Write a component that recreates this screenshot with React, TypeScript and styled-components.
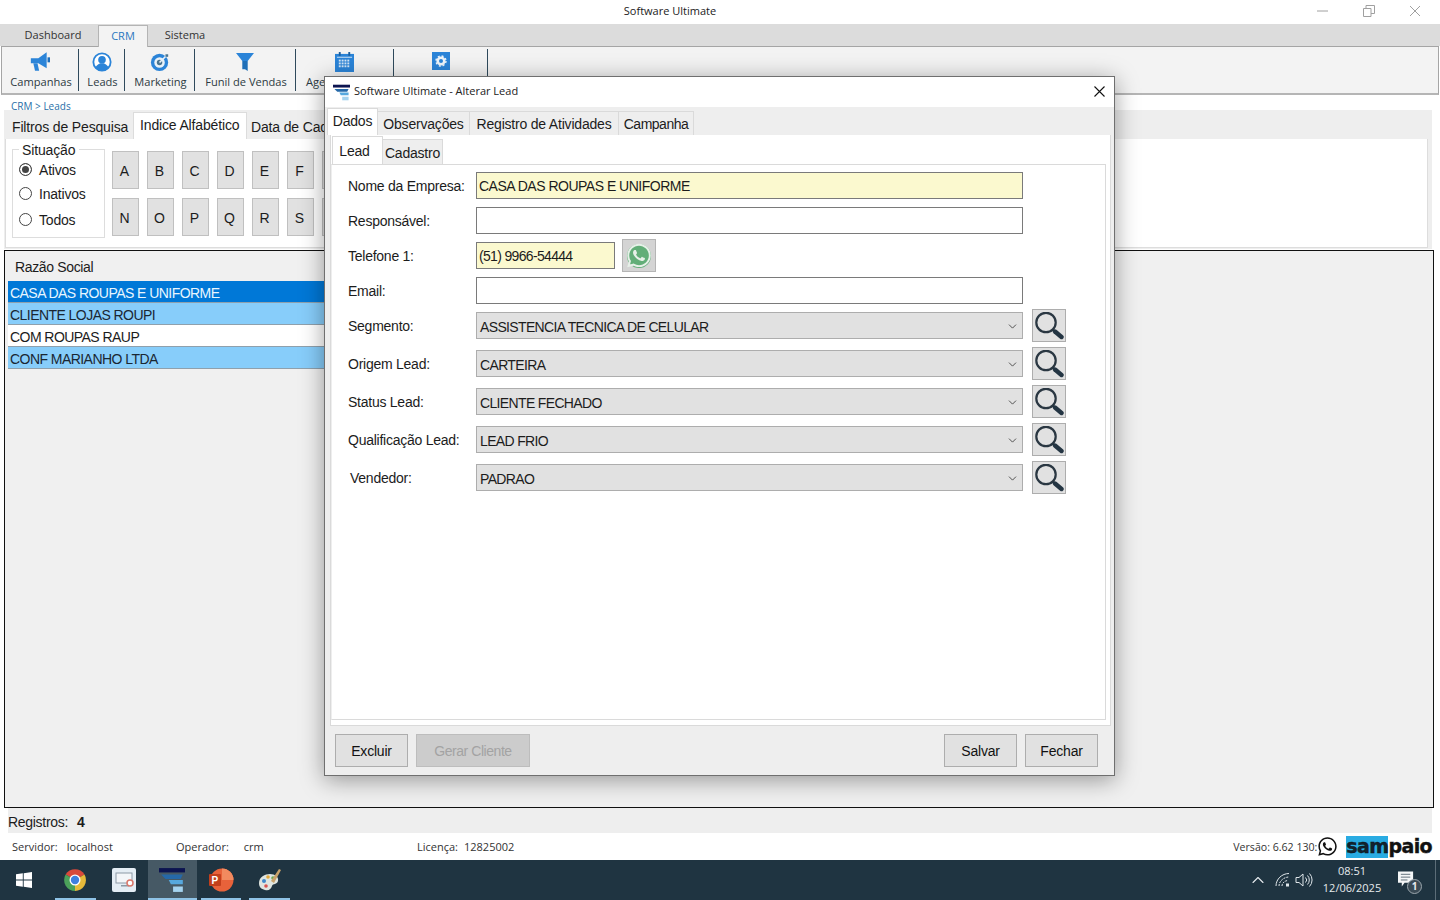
import React from 'react';
import styled, {createGlobalStyle} from "styled-components";
import {FaWhatsapp} from "react-icons/fa";
import {ChevronDown, ChevronUp} from "lucide-react";

const ui = `"Open Sans", "Noto Sans", sans-serif`;
const form = `"Liberation Sans", Arial, sans-serif`;

const GlobalStyle = createGlobalStyle`
    html, body {
        margin: 0;
        padding: 0;
        background: #fff;
    }
    * {
        box-sizing: border-box;
    }
`

// the rest of the alphabet sits behind the dialog
const LETTERS_TOP = 'ABCDEFG'.split('');
const LETTERS_BOTTOM = 'NOPQRST'.split('');

const LEADS = [
    {name: 'CASA DAS ROUPAS E UNIFORME', kind: 'selected'},
    {name: 'CLIENTE LOJAS ROUPI', kind: 'hot'},
    {name: 'COM ROUPAS RAUP', kind: 'plain'},
    {name: 'CONF MARIANHO LTDA', kind: 'hot'},
];

const SELECTS = [
    {label: 'Segmento:', value: 'ASSISTENCIA TECNICA DE CELULAR'},
    {label: 'Origem Lead:', value: 'CARTEIRA'},
    {label: 'Status Lead:', value: 'CLIENTE FECHADO'},
    {label: 'Qualificação Lead:', value: 'LEAD FRIO'},
    {label: 'Vendedor:', value: 'PADRAO', shifted: true},
];

const BLUE = '#2b84d8';

const MegaphoneIcon = () => (
    <svg width="20" height="19" viewBox="0 0 24 22">
        <path d="M1 7h9L20 0v19L10 13H1z" fill={BLUE}/>
        <path d="M4 13h5l2 9H6z" fill={BLUE}/>
        <rect x="21" y="6" width="3" height="6" fill="#1c6fbe"/>
    </svg>
);

const LeadsIcon = () => (
    <svg width="20" height="20" viewBox="0 0 22 22">
        <circle cx="11" cy="11" r="9.500" fill="#fff" stroke={BLUE} strokeWidth="2"/>
        <circle cx="11" cy="8.500" r="4.200" fill={BLUE}/>
        <path d="M3.500 17c2-3 4.500-3.600 5.500-4.500h4c1 .9 3.500 1.500 5.500 4.500a9 9 0 0 1-15 0z" fill={BLUE}/>
    </svg>
);

const TargetIcon = () => (
    <svg width="20" height="20" viewBox="0 0 22 22">
        <circle cx="10.500" cy="11.500" r="9.500" fill={BLUE}/>
        <circle cx="10.500" cy="11.500" r="5.800" fill="#e8f1f8"/>
        <circle cx="10.500" cy="11.500" r="3" fill="#4b7590"/>
        <path d="M10.500 11.500 19 3" stroke="#e8f1f8" strokeWidth="1.800"/>
        <path d="M17 2.500h3v2.800h-3z" fill="#4b7590"/>
    </svg>
);

const FunnelIcon = () => (
    <svg width="18" height="20" viewBox="0 0 20 22">
        <path d="M0 1h20l-7 9H7z" fill={BLUE}/>
        <path d="M7 10h6v11l-3-2H7z" fill="#1f6fb8"/>
    </svg>
);

const CalendarIcon = () => (
    <svg width="19" height="20" viewBox="0 0 20 21">
        <rect x="0" y="2" width="20" height="19" fill={BLUE}/>
        <rect x="4" y="0" width="2" height="4" fill="#1c5f9e"/>
        <rect x="14" y="0" width="2" height="4" fill="#1c5f9e"/>
        <rect x="2" y="5" width="16" height="1" fill="#d5e7f7"/>
        {[8, 11, 14].map(y => [4, 7, 10, 13].map(x => (
            <rect key={`${x}-${y}`} x={x} y={y} width="2" height="2" fill="#d5e7f7"/>
        )))}
    </svg>
);

const GearIcon = () => (
    <svg width="18" height="18" viewBox="0 0 18 18">
        <rect width="18" height="18" fill={BLUE}/>
        <circle cx="9" cy="9" r="3.300" fill="none" stroke="#eef5fb" strokeWidth="2.600"/>
        <circle cx="9" cy="9" r="5" fill="none" stroke="#eef5fb" strokeWidth="1.400" strokeDasharray="2 1.930"/>
    </svg>
);

const SearchIcon = () => (
    <svg width="30" height="28" viewBox="0 0 30 28">
        <circle cx="12" cy="10.500" r="9.700" fill="none" stroke="#2a3742" strokeWidth="2.200"/>
        <path d="M19 17.500 20.500 19" stroke="#2a3742" strokeWidth="2"/>
        <path d="M21 19.500 27.500 25" stroke="#243543" strokeWidth="4.400" strokeLinecap="round"/>
    </svg>
);

const AppLogo = ({size}: {size: number}) => (
    <svg width={size} height={size} viewBox="0 0 24 24">
        <rect x="0" y="1" width="24" height="4" fill="#0c1450"/>
        <path d="M2 7h20l-2 4H6z" fill="#2568a8"/>
        <path d="M9 12h13v4H11z" fill="#56a8de"/>
        <rect x="13" y="18" width="9" height="5" fill="#a5d3ef"/>
    </svg>
);

const WindowsIcon = () => (
    <svg width="16" height="16" viewBox="0 0 16 16">
        <path d="M0 2.300 6.800 1.300v6.200H0zM7.700 1.200 16 0v7.500H7.700zM0 8.400h6.800v6.300L0 13.700zM7.700 8.400H16V16l-8.300-1.200z" fill="#fff"/>
    </svg>
);

const ChromeIcon = () => (
    <svg width="24" height="24" viewBox="0 0 24 24">
        <path d="M12 12 2.600 6.500A11 11 0 0 1 21.500 6.500z" fill="#d9493b"/>
        <path d="M12 12 21.500 6.500A11 11 0 0 1 12 23z" fill="#e6b93a"/>
        <path d="M12 12 12 23A11 11 0 0 1 2.600 6.500z" fill="#4ba15a"/>
        <circle cx="12" cy="12" r="5.500" fill="#fff"/>
        <circle cx="12" cy="12" r="4.200" fill="#3f7fe0"/>
    </svg>
);

const SlideIcon = () => (
    <svg width="24" height="24" viewBox="0 0 24 24">
        <rect width="24" height="24" rx="2" fill="#e4edf4"/>
        <rect x="4" y="5" width="16" height="10" fill="#f3f6f9" stroke="#8c9aa6"/>
        <rect x="9" y="17" width="8" height="1.500" fill="#8c9aa6"/>
        <circle cx="18" cy="15" r="3" fill="#fff" stroke="#d9776a" strokeWidth="1.500"/>
    </svg>
);

const PowerPointIcon = () => (
    <svg width="26" height="24" viewBox="0 0 26 24">
        <circle cx="14" cy="12" r="11.500" fill="#e8623a"/>
        <path d="M14 .5A11.500 11.500 0 0 1 25.500 12H14z" fill="#f28a5f"/>
        <rect x="1" y="6" width="12" height="12" rx="1" fill="#c23f1c"/>
        <text x="3.500" y="16" fill="#fff" fontSize="10" fontWeight="700" fontFamily={form}>P</text>
    </svg>
);

const PaletteIcon = () => (
    <svg width="24" height="26" viewBox="0 0 24 26">
        <path d="M1 16c0-6 6-9 11-9s9 3 8 7-5 2-6 5-3 5-7 4-6-3-6-7z" fill="#dfe5e0"/>
        <circle cx="6" cy="14" r="2" fill="#3f88c9"/>
        <circle cx="10" cy="10" r="1.800" fill="#e2a93b"/>
        <circle cx="15" cy="11" r="1.800" fill="#6aa84f"/>
        <circle cx="8" cy="19" r="1.800" fill="#d9534f"/>
        <path d="M13 14 21 2l2 1-7 13z" fill="#c9a26a"/>
    </svg>
);

const WifiIcon = () => (
    <svg width="16" height="16" viewBox="0 0 16 16" fill="none" stroke="#dfe6ea" strokeWidth="1">
        <path d="M1 14C1 7 7 1.500 14 1.500"/>
        <path d="M4 14C4 9 9 5 14 5" strokeDasharray="2 1"/>
        <path d="M7 14C7 11 10 8.500 13 8.500" strokeDasharray="2 1"/>
        <rect x="11" y="11.500" width="3" height="3" fill="#dfe6ea" stroke="none"/>
    </svg>
);

const SpeakerIcon = () => (
    <svg width="18" height="16" viewBox="0 0 18 16" fill="none" stroke="#dfe6ea" strokeWidth="1">
        <path d="M1 5.500h3L8 2v12l-4-3.500H1z"/>
        <path d="M10.500 5.500a3.500 3.500 0 0 1 0 5"/>
        <path d="M12.500 3.500a6.500 6.500 0 0 1 0 9"/>
        <path d="M14.500 1.500a9.500 9.500 0 0 1 0 13"/>
    </svg>
);

const NotificationIcon = () => (
    <svg width="17" height="17" viewBox="0 0 18 17">
        <path d="M0 0h16v12H7l-3 4v-4H0z" fill="#f4f6f7"/>
        <path d="M3 3h10M3 6h10M3 9h7" stroke="#5b6b76" strokeWidth="1"/>
    </svg>
);

const toolItems = [
    {id: 'campanhas', label: 'Campanhas', width: 77, icon: <MegaphoneIcon/>},
    {id: 'leads', label: 'Leads', width: 46, icon: <LeadsIcon/>},
    {id: 'marketing', label: 'Marketing', width: 70, icon: <TargetIcon/>},
    {id: 'funil', label: 'Funil de Vendas', width: 101, icon: <FunnelIcon/>},
    {id: 'agenda', label: 'Age', width: 98, icon: <CalendarIcon/>, cutOff: true},
    {id: 'ajustes', label: '', width: 94, icon: <GearIcon/>},
];

const App = () => {
    return (
        <Screen>
            <GlobalStyle/>
            <TitleBar>
                <TitleText>Software Ultimate</TitleText>
                <WindowControls>
                    <svg width="12" height="12" viewBox="0 0 12 12"><path d="M0 6h11" stroke="#a0a0a0"/></svg>
                    <svg width="12" height="12" viewBox="0 0 12 12" fill="none" stroke="#a0a0a0"><path d="M.5 3.500h7.500v8H.5zM3 3.500V.5h8.500v8H8"/></svg>
                    <svg width="12" height="12" viewBox="0 0 12 12"><path d="M1 1l10 10M11 1 1 11" stroke="#a0a0a0"/></svg>
                </WindowControls>
            </TitleBar>

            <MenuStrip>
                <MenuTab $width={90}>Dashboard</MenuTab>
                <MenuTab $width={50} $active>CRM</MenuTab>
                <MenuTab $width={74}>Sistema</MenuTab>
            </MenuStrip>

            <Toolbar>
                {toolItems.map(item => (
                    <ToolItem key={item.id} $width={item.width}>
                        <ToolIcon>{item.icon}</ToolIcon>
                        <ToolLabel $cutOff={item.cutOff}>{item.label}</ToolLabel>
                    </ToolItem>
                ))}
            </Toolbar>

            <Breadcrumb>CRM &gt; Leads</Breadcrumb>

            <FilterTabs>
                <TabRow>
                    <BackTab $width={128} $pad={7}>Filtros de Pesquisa</BackTab>
                    <BackTab $width={114} $pad={6} $active>Indice Alfabético</BackTab>
                    <BackTab $width={78} $pad={4}>Data de Cad</BackTab>
                </TabRow>
                <FilterPanel>
                    <SituationBox>
                        <SituationLegend>Situação</SituationLegend>
                        <RadioRow $bottom={8}><Radio $checked/>Ativos</RadioRow>
                        <RadioRow $bottom={10}><Radio/>Inativos</RadioRow>
                        <RadioRow $bottom={0}><Radio/>Todos</RadioRow>
                    </SituationBox>
                    <LetterGrid>
                        {[LETTERS_TOP, LETTERS_BOTTOM].map(row => (
                            <LetterRow key={row[0]}>
                                {row.map(letter => (
                                    <LetterButton key={letter}>{letter === 'G' || letter === 'T' ? '' : letter}</LetterButton>
                                ))}
                            </LetterRow>
                        ))}
                    </LetterGrid>
                </FilterPanel>
            </FilterTabs>

            <LeadGrid>
                <GridHeader>Razão Social</GridHeader>
                {LEADS.map(lead => <GridRow key={lead.name} $kind={lead.kind}>{lead.name}</GridRow>)}
            </LeadGrid>

            <CountBar>
                <span>Registros:</span>
                <CountValue>4</CountValue>
            </CountBar>

            <StatusBar>
                <StatusField $width={164}>Servidor:<StatusValue $gap={9}>localhost</StatusValue></StatusField>
                <StatusField $width={241}>Operador:<StatusValue $gap={15}>crm</StatusValue></StatusField>
                <StatusField $width={400}>Licença:<StatusValue $gap={6}>12825002</StatusValue></StatusField>
                <StatusRight>
                    <VersionText>Versão: 6.62 130:</VersionText>
                    <FaWhatsapp size={21} color="#111"/>
                    <SampaioLogo><SampaioMark>sam</SampaioMark>paio</SampaioLogo>
                </StatusRight>
            </StatusBar>

            <Taskbar>
                <StartButton><WindowsIcon/></StartButton>
                <TaskItem $running><ChromeIcon/></TaskItem>
                <TaskItem><SlideIcon/></TaskItem>
                <TaskItem $running $active><AppLogo size={26}/></TaskItem>
                <TaskItem $running><PowerPointIcon/></TaskItem>
                <TaskItem $running><PaletteIcon/></TaskItem>
                <Tray>
                    <ChevronUp size={20} color="#e6ebee" strokeWidth={1.300}/>
                    <WifiIcon/>
                    <SpeakerSlot><SpeakerIcon/></SpeakerSlot>
                    <Clock>
                        <span>08:51</span>
                        <span>12/06/2025</span>
                    </Clock>
                    <NotificationArea>
                        <NotificationIcon/>
                        <NotificationBadge>1</NotificationBadge>
                    </NotificationArea>
                    <ShowDesktop/>
                </Tray>
            </Taskbar>

            <Modal>
                <ModalTitle>
                    <AppLogo size={17}/>
                    <ModalTitleText>Software Ultimate - Alterar Lead</ModalTitleText>
                    <ModalClose>
                        <svg width="11" height="11" viewBox="0 0 11 11"><path d="M.5.5l10 10M10.500.5l-10 10" stroke="#111" strokeWidth="1.100"/></svg>
                    </ModalClose>
                </ModalTitle>

                <ModalTabRow>
                    <ModalTab $width={51} $active>Dados</ModalTab>
                    <ModalTab $width={92}>Observações</ModalTab>
                    <ModalTab $width={149}>Registro de Atividades</ModalTab>
                    <ModalTab $width={75} $tight>Campanha</ModalTab>
                </ModalTabRow>

                <ModalPage>
                    <InnerTabRow>
                        <InnerTab $width={51} $active>Lead</InnerTab>
                        <InnerTab $width={60}>Cadastro</InnerTab>
                    </InnerTabRow>
                    <FormPanel>
                        <FormRow>
                            <FieldLabel>Nome da Empresa:</FieldLabel>
                            <TextField $required>CASA DAS ROUPAS E UNIFORME</TextField>
                        </FormRow>
                        <FormRow>
                            <FieldLabel>Responsável:</FieldLabel>
                            <TextField/>
                        </FormRow>
                        <FormRow>
                            <FieldLabel>Telefone 1:</FieldLabel>
                            <TextField $required $compact $width={139}>(51) 9966-54444</TextField>
                            <WhatsButton>
                                <WhatsDisc><FaWhatsapp size={27} color="#e6f0e8"/></WhatsDisc>
                            </WhatsButton>
                        </FormRow>
                        <FormRow>
                            <FieldLabel>Email:</FieldLabel>
                            <TextField/>
                        </FormRow>
                        {SELECTS.map(field => (
                            <SelectRow key={field.label}>
                                <FieldLabel $shifted={field.shifted}>{field.label}</FieldLabel>
                                <SelectField>
                                    <SelectValue>{field.value}</SelectValue>
                                    <SelectChevron size={13} color="#333" strokeWidth={1.500}/>
                                </SelectField>
                                <SearchButton><SearchIcon/></SearchButton>
                            </SelectRow>
                        ))}
                    </FormPanel>
                </ModalPage>

                <ModalFooter>
                    <FooterButton>Excluir</FooterButton>
                    <FooterButton $disabled $width={114}>Gerar Cliente</FooterButton>
                    <FooterSpacer/>
                    <FooterButton>Salvar</FooterButton>
                    <FooterButton>Fechar</FooterButton>
                </ModalFooter>
            </Modal>
        </Screen>
    );
};

export default App;

const Screen = styled.div`
    position: relative;
    width: 1440px;
    height: 900px;
    overflow: hidden;
    display: flex;
    flex-direction: column;
    background: #fff;
`

const TitleBar = styled.div`
    height: 24px;
    flex: none;
    padding: 0 100px 4px 0;
    display: flex;
    align-items: center;
    justify-content: center;
    position: relative;
`

const TitleText = styled.span`
    font: 11px ${ui};
    color: #222;
`

const WindowControls = styled.div`
    position: absolute;
    top: 5px;
    right: 19px;
    display: flex;
    gap: 34px;
`

const MenuStrip = styled.div`
    height: 22px;
    flex: none;
    display: flex;
    padding-left: 8px;
    background: #dcdcdc;
`

const MenuTab = styled.div<{$width: number, $active?: boolean}>`
    width: ${props => props.$width}px;
    height: ${props => props.$active ? 22 : 21}px;
    margin-top: 1px;
    padding-bottom: 2px;
    display: flex;
    align-items: center;
    justify-content: center;
    font: 11px ${ui};
    color: ${props => props.$active ? '#2a78c0' : '#333'};
    background: ${props => props.$active ? '#f3f3f3' : 'transparent'};
    border: ${props => props.$active ? '1px solid #b4b4b4' : 'none'};
    border-bottom: none;
    z-index: 1;
`

const Toolbar = styled.div`
    height: 49px;
    flex: none;
    margin: 0 1px;
    padding: 2px 0;
    display: flex;
    background: #f3f3f3;
    border: 1px solid #a5a5a5;
    border-bottom: 2px solid #b5b5b5;
`

const ToolItem = styled.div<{$width: number}>`
    width: ${props => props.$width}px;
    height: 42px;
    display: flex;
    flex-direction: column;
    align-items: center;
    border-right: 1px solid #2f4a5c;
`

const ToolIcon = styled.div`
    height: 25px;
    padding-top: 3px;
    display: flex;
    align-items: flex-start;
    justify-content: center;
`

const ToolLabel = styled.span<{$cutOff?: boolean}>`
    align-self: ${props => props.$cutOff ? 'flex-start' : 'center'};
    padding-left: ${props => props.$cutOff ? 10 : 2}px;
    font: 11.100px ${ui};
    color: #2c3a42;
    white-space: nowrap;
`

const Breadcrumb = styled.div`
    height: 15px;
    flex: none;
    padding: 6px 0 0 11px;
    font: 10px/11px ${ui};
    color: #2a6fa8;
`

const FilterTabs = styled.div`
    width: 1428px;
    height: 139px;
    flex: none;
    margin-left: 4px;
    background: #eeeeee;
`

const TabRow = styled.div`
    height: 29px;
    display: flex;
    align-items: flex-end;
    padding-left: 1px;
`

const BackTab = styled.div<{$width: number, $pad: number, $active?: boolean}>`
    width: ${props => props.$width}px;
    height: ${props => props.$active ? 27 : 24}px;
    flex: none;
    display: flex;
    align-items: center;
    padding-left: ${props => props.$pad}px;
    padding-bottom: ${props => props.$active ? 2 : 0}px;
    font: 14px ${form};
    letter-spacing: -0.15px;
    color: #1c1c1c;
    background: ${props => props.$active ? '#fff' : 'transparent'};
    border: ${props => props.$active ? '1px solid #dcdcdc' : 'none'};
    border-bottom: none;
    white-space: nowrap;
`

const FilterPanel = styled.div`
    height: 109px;
    margin: 0 4px 0 1px;
    padding: 9px 0 0 6px;
    display: flex;
    gap: 7px;
    background: #fff;
    border: 1px solid #dddddd;
    border-top: none;
`

const SituationBox = styled.div`
    position: relative;
    width: 93px;
    height: 89px;
    margin-top: 1px;
    padding: 12px 0 0 6px;
    border: 1px solid #dddddd;
`

const SituationLegend = styled.span`
    position: absolute;
    top: -8px;
    left: 6px;
    padding: 0 4px 0 3px;
    background: #fff;
    font: 14px ${form};
    letter-spacing: -0.15px;
    color: #1c1c1c;
`

const RadioRow = styled.div<{$bottom: number}>`
    height: 16px;
    margin-bottom: ${props => props.$bottom}px;
    display: flex;
    align-items: center;
    gap: 7px;
    font: 14px ${form};
    letter-spacing: -0.2px;
    color: #1c1c1c;
`

const Radio = styled.span<{$checked?: boolean}>`
    width: 13px;
    height: 13px;
    flex: none;
    margin-top: -2px;
    border-radius: 50%;
    border: 1px solid #444;
    background: ${props => props.$checked ? '#444' : '#fff'};
    box-shadow: ${props => props.$checked ? 'inset 0 0 0 2px #fff' : 'none'};
`

const LetterGrid = styled.div`
    display: flex;
    flex-direction: column;
    gap: 9px;
    margin-top: 3px;
`

const LetterRow = styled.div`
    display: flex;
    gap: 8px;
`

const LetterButton = styled.div`
    width: 27px;
    height: 38px;
    padding: 2px 2px 0 0;
    display: flex;
    align-items: center;
    justify-content: center;
    font: 14px ${form};
    color: #1c1c1c;
    background: #e1e1e1;
    border: 1px solid #c0c0c0;
`

const LeadGrid = styled.div`
    width: 1430px;
    height: 558px;
    flex: none;
    margin: 1px 0 0 4px;
    padding: 1px 0 0 3px;
    background: #f0f0f0;
    border: 1px solid #111;
`

const GridHeader = styled.div`
    height: 29px;
    padding-left: 7px;
    display: flex;
    align-items: center;
    font: 14px ${form};
    letter-spacing: -0.35px;
    color: #1c1c1c;
`

const rowColors: Record<string, {bg: string, fg: string}> = {
    selected: {bg: '#0078d7', fg: '#e8f6ff'},
    hot: {bg: '#87cdfa', fg: '#1a2733'},
    plain: {bg: '#ffffff', fg: '#1c1c1c'},
};

const GridRow = styled.div<{$kind: string}>`
    width: 600px;
    height: 22px;
    padding: 2px 0 0 2px;
    font: 14px/20px ${form};
    letter-spacing: -0.55px;
    color: ${props => rowColors[props.$kind].fg};
    background: ${props => rowColors[props.$kind].bg};
    border-bottom: 1px solid #8fa0ac;
`

const CountBar = styled.div`
    width: 1424px;
    height: 25px;
    flex: none;
    margin-left: 8px;
    padding-top: 2px;
    display: flex;
    align-items: center;
    gap: 9px;
    background: #eeeeee;
    font: 14px ${form};
    letter-spacing: -0.3px;
    color: #1c1c1c;
`

const CountValue = styled.b`
    font-weight: 700;
`

const StatusBar = styled.div`
    height: 27px;
    flex: none;
    padding-left: 12px;
    display: flex;
    align-items: center;
    font: 11px ${ui};
    color: #333;
`

const StatusField = styled.div<{$width: number}>`
    width: ${props => props.$width}px;
    flex: none;
    white-space: nowrap;
`

const StatusValue = styled.span<{$gap: number}>`
    margin-left: ${props => props.$gap}px;
`

const StatusRight = styled.div`
    flex: 1;
    display: flex;
    align-items: center;
    justify-content: flex-end;
    padding-right: 8px;
`

const VersionText = styled.span`
    width: 84px;
    font-size: 10.600px;
    white-space: nowrap;
`

const SampaioLogo = styled.span`
    margin-left: 8px;
    height: 22px;
    font: 700 19px/21px "DejaVu Sans", sans-serif;
    letter-spacing: -0.6px;
    color: #111;
    -webkit-text-stroke: 0.4px #111;
`

const SampaioMark = styled.span`
    display: inline-block;
    height: 22px;
    background: #29abe2;
    color: #10222e;
`

const Taskbar = styled.div`
    height: 40px;
    flex: none;
    display: flex;
    background: #1f3441;
`

const StartButton = styled.div`
    width: 51px;
    display: flex;
    align-items: center;
    justify-content: center;
    padding-right: 4px;
`

const TaskItem = styled.div<{$running?: boolean, $active?: boolean}>`
    position: relative;
    width: 48.600px;
    display: flex;
    align-items: center;
    justify-content: center;
    background: ${props => props.$active ? '#465965' : 'transparent'};

    &::after {
        content: '';
        display: ${props => props.$running ? 'block' : 'none'};
        position: absolute;
        bottom: 0;
        left: ${props => props.$active ? 0 : 4}px;
        right: ${props => props.$active ? 0 : 4}px;
        height: 2px;
        background: #8fc3e6;
    }
`

const Tray = styled.div`
    flex: 1;
    display: flex;
    align-items: center;
    justify-content: flex-end;
    gap: 7px;
`

const SpeakerSlot = styled.div`
    margin-left: -3px;
    display: flex;
`

const Clock = styled.div`
    width: 70px;
    margin: -2px 0 0 -3px;
    display: flex;
    flex-direction: column;
    align-items: center;
    font: 11px/17px ${ui};
    color: #e6ebee;
`

const NotificationArea = styled.div`
    position: relative;
    width: 46px;
    margin: -2px 0 0 -12px;
    padding-left: 16px;
    display: flex;
`

const NotificationBadge = styled.span`
    position: absolute;
    top: 8px;
    left: 25px;
    width: 15px;
    height: 15px;
    border-radius: 50%;
    background: #3a4a55;
    border: 1px solid #9aa5ac;
    font: 700 10px/13px ${ui};
    text-align: center;
    color: #e6ebee;
`

const ShowDesktop = styled.div`
    width: 5px;
    height: 40px;
    border-left: 1px solid #5c6d78;
`

const Modal = styled.div`
    position: absolute;
    top: 76px;
    left: 324px;
    width: 791px;
    height: 700px;
    display: flex;
    flex-direction: column;
    background: #eeeeee;
    border: 1px solid #6f6f6f;
    box-shadow: 0 4px 22px rgba(0, 0, 0, 0.38);
`

const ModalTitle = styled.div`
    height: 30px;
    flex: none;
    padding-left: 8px;
    display: flex;
    align-items: center;
    background: #fff;
`

const ModalTitleText = styled.span`
    margin: 0 0 3px 4px;
    font: 11px ${ui};
    color: #222;
`

const ModalClose = styled.div`
    margin: 0 9px 1px auto;
    display: flex;
`

const ModalTabRow = styled.div`
    height: 28px;
    flex: none;
    padding-left: 2px;
    display: flex;
    align-items: flex-end;
`

const ModalTab = styled.div<{$width: number, $active?: boolean, $tight?: boolean}>`
    width: ${props => props.$width}px;
    height: ${props => props.$active ? 27 : 24}px;
    flex: none;
    display: flex;
    align-items: center;
    justify-content: center;
    padding-bottom: ${props => props.$active ? 2 : 0}px;
    font: 14px ${form};
    letter-spacing: ${props => props.$tight ? -0.5 : -0.2}px;
    color: #1c1c1c;
    background: ${props => props.$active ? '#fff' : '#eeeeee'};
    border: 1px solid #dadada;
    border-bottom: none;
    border-left: ${props => props.$active ? '1px solid #dadada' : 'none'};
`

const ModalPage = styled.div`
    height: 591px;
    flex: none;
    margin: 0 3px 0 5px;
    display: flex;
    flex-direction: column;
    background: #fff;
    border: 1px solid #dadada;
    border-top: none;
`

const InnerTabRow = styled.div`
    height: 29px;
    flex: none;
    padding-left: 1px;
    display: flex;
    align-items: flex-end;
`

const InnerTab = styled(ModalTab)`
    height: ${props => props.$active ? 28 : 25}px;
    padding: ${props => props.$active ? '0 6px 0 0' : '2px 0 0 0'};
    background: ${props => props.$active ? '#fff' : '#eeeeee'};
`

const FormPanel = styled.div`
    width: 775px;
    height: 556px;
    flex: none;
    padding: 7px 0 0 16px;
    border: 1px solid #dadada;
    border-left-color: #eeeeee;
`

const FormRow = styled.div`
    height: 27px;
    margin-bottom: 8px;
    display: flex;
    align-items: center;
`

const SelectRow = styled(FormRow)`
    margin-bottom: 11px;
`

const FieldLabel = styled.label<{$shifted?: boolean}>`
    width: 128px;
    flex: none;
    padding: 1px 0 0 ${props => props.$shifted ? 2 : 0}px;
    font: 14px ${form};
    letter-spacing: -0.25px;
    color: #1c1c1c;
    white-space: nowrap;
`

const TextField = styled.div<{$required?: boolean, $compact?: boolean, $width?: number}>`
    width: ${props => props.$width ?? 547}px;
    height: 27px;
    flex: none;
    padding: 1px 0 0 2px;
    display: flex;
    align-items: center;
    font: 14px ${form};
    letter-spacing: ${props => props.$compact ? -0.67 : -0.5}px;
    color: #1c1c1c;
    background: ${props => props.$required ? '#fbf9cf' : '#fff'};
    border: 1px solid #7a7a7a;
`

const WhatsButton = styled.div`
    width: 34px;
    height: 33px;
    flex: none;
    margin-left: 7px;
    display: flex;
    align-items: center;
    justify-content: center;
    background: #d4d4d4;
    border: 1px solid #b5b5b5;
`

const WhatsDisc = styled.span`
    width: 24px;
    height: 24px;
    display: flex;
    align-items: center;
    justify-content: center;
    border-radius: 50%;
    background: #62ae78;
`

const SelectField = styled.div`
    width: 547px;
    height: 27px;
    flex: none;
    padding: 0 3px;
    display: flex;
    align-items: center;
    justify-content: space-between;
    font: 14px ${form};
    letter-spacing: -0.65px;
    color: #1c1c1c;
    background: #e1e1e1;
    border: 1px solid #adadad;
`

const SelectValue = styled.span`
    padding-top: 2px;
`

const SelectChevron = styled(ChevronDown)`
    margin-top: 2px;
`

const SearchButton = styled.div`
    width: 34px;
    height: 33px;
    flex: none;
    margin-left: 9px;
    display: flex;
    align-items: center;
    justify-content: center;
    background: #e1e1e1;
    border: 1px solid #adadad;
`

const ModalFooter = styled.div`
    flex: 1;
    padding: 8px 16px 0 10px;
    display: flex;
    align-items: flex-start;
    gap: 8px;
`

const FooterSpacer = styled.div`
    flex: 1;
`

const FooterButton = styled.div<{$disabled?: boolean, $width?: number}>`
    width: ${props => props.$width ?? 73}px;
    height: 33px;
    flex: none;
    padding-top: 1px;
    display: flex;
    align-items: center;
    justify-content: center;
    font: 14px ${form};
    letter-spacing: ${props => props.$disabled ? -0.45 : -0.2}px;
    color: ${props => props.$disabled ? '#a3a3a3' : '#111'};
    background: ${props => props.$disabled ? '#cccccc' : '#e1e1e1'};
    border: 1px solid ${props => props.$disabled ? '#bdbdbd' : '#adadad'};
`
